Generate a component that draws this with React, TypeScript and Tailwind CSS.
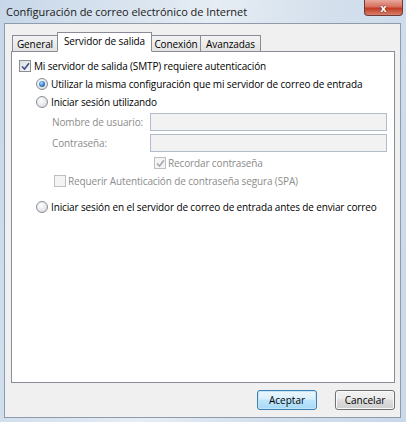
import React from "react";

const F = { fontFamily: '"Open Sans", "Noto Sans", sans-serif' };

function Radio({ checked }: { checked?: boolean }) {
  return (
    <span className="relative inline-flex w-[12px] h-[12px] shrink-0 rounded-full border border-[#8b8d92] bg-[radial-gradient(circle_at_40%_35%,#ffffff_0%,#e6e8eb_55%,#c8ccd2_100%)] items-center justify-center">
      {checked && (
        <span className="w-[6px] h-[6px] rounded-full bg-[radial-gradient(circle_at_40%_35%,#bfe3ff_0%,#3b8ad4_45%,#1b4f86_100%)]" />
      )}
    </span>
  );
}

function Check({ checked, disabled }: { checked?: boolean; disabled?: boolean }) {
  return (
    <span
      className={
        "relative inline-flex w-[12px] h-[12px] shrink-0 border items-center justify-center " +
        (disabled
          ? "border-[#bcbec2] bg-[#f4f4f4]"
          : "border-[#8b8d92] bg-[linear-gradient(135deg,#d9dde2_0%,#f7f7f8_100%)]")
      }
    >
      {checked && (
        <svg width="9" height="9" viewBox="0 0 9 9">
          <path
            d="M1 4.5 L3.5 7 L8 1.2"
            fill="none"
            stroke={disabled ? "#a6a8ac" : "#3f4f8c"}
            strokeWidth="1.6"
          />
        </svg>
      )}
    </span>
  );
}

function Tab({ label, w, selected }: { label: string; w: string; selected?: boolean }) {
  return (
    <div
      className={
        "flex items-center justify-center border border-[#898c95] -ml-px text-[10px] tracking-[-0.1px] text-black " +
        w +
        (selected
          ? " h-[20px] bg-white border-b-white relative z-10 pb-[2px]"
          : " h-[17px] bg-[linear-gradient(#f4f4f4,#e2e2e2)] border-b-0")
      }
    >
      {label}
    </div>
  );
}

export default function App() {
  return (
    <div
      style={F}
      className="w-[406px] h-[422px] overflow-hidden flex flex-col bg-[linear-gradient(100deg,#c7d7e9_0%,#dbe5f0_30%,#e6edf4_45%,#d3dfec_70%,#c9d9ea_100%)]"
    >
      <div className="relative h-[23px] flex items-center pl-[6px] shrink-0">
        <span className="text-[11px] text-[#1a1a1a] pt-[1px] tracking-[-0.05px]">
          Configuración de correo electrónico de Internet
        </span>
        <div className="absolute top-0 right-[3px] w-[39px] h-[16px] rounded-b-[4px] border border-[#6e3b36] border-t-0 bg-[linear-gradient(#e8a89c_0%,#d6705e_45%,#c13b24_55%,#d9806c_100%)] flex items-center justify-center">
          <span className="text-white font-bold text-[11px] leading-none [text-shadow:0_0_1px_#5a1a10,0_0_1px_#5a1a10]">x</span>
        </div>
      </div>
      <div className="ml-[4px] mr-[5px] h-[395px] border border-[#8f9bab] bg-[#f0f0f0] flex flex-col px-[6px] pr-[5px] pt-[9px]">
        <div className="flex items-end h-[19px] pl-[2px] -mb-px">
          <Tab label="General" w="w-[46px]" />
          <Tab label="Servidor de salida" w="w-[95px]" selected />
          <Tab label="Conexión" w="w-[50px]" />
          <Tab label="Avanzadas" w="w-[61px]" />
        </div>
        <div className="h-[332px] border border-[#898c95] bg-white flex flex-col text-[10px] tracking-[-0.13px] text-black pt-[5px]">
          <div className="h-[18px] flex items-center pl-[7px] gap-[3px]">
            <Check checked />
            <span>Mi servidor de salida (SMTP) requiere autenticación</span>
          </div>
          <div className="h-[18px] flex items-center pl-[24px] gap-[3px]">
            <Radio checked />
            <span>Utilizar la misma configuración que mi servidor de correo de entrada</span>
          </div>
          <div className="h-[18px] flex items-center pl-[24px] gap-[3px]">
            <Radio />
            <span>Iniciar sesión utilizando</span>
          </div>
          <div className="mt-[2px] h-[18px] flex items-center pl-[40px] text-[#8c8c8c]">
            <span className="w-[98px]">Nombre de usuario:</span>
            <div className="w-[237px] h-[18px] border border-[#b3bccb] bg-[#f2f2f2]" />
          </div>
          <div className="mt-[3px] h-[18px] flex items-center pl-[40px] text-[#8c8c8c]">
            <span className="w-[98px]">Contraseña:</span>
            <div className="w-[237px] h-[18px] border border-[#b3bccb] bg-[#f2f2f2]" />
          </div>
          <div className="mt-[2px] h-[18px] flex items-center pl-[142px] gap-[2px] text-[#8c8c8c]">
            <Check checked disabled />
            <span>Recordar contraseña</span>
          </div>
          <div className="h-[18px] flex items-center pl-[42px] gap-[2px] text-[#8c8c8c]">
            <Check disabled />
            <span>Requerir Autenticación de contraseña segura (SPA)</span>
          </div>
          <div className="mt-[8px] h-[18px] flex items-center pl-[24px] gap-[3px]">
            <Radio />
            <span>Iniciar sesión en el servidor de correo de entrada antes de enviar correo</span>
          </div>
        </div>
        <div className="flex justify-end gap-[18px] mt-[7px]">
          <button className="w-[60px] h-[20px] rounded-[3px] border border-[#3c7fb1] bg-[linear-gradient(#eaf6fd_0%,#d9f0fc_45%,#bee6fd_50%,#a7d9f5_100%)] text-[10px] text-black shadow-[inset_0_0_0_1px_#c4e5f6]">
            Aceptar
          </button>
          <button className="w-[60px] h-[20px] rounded-[3px] border border-[#707070] bg-[linear-gradient(#f2f2f2_0%,#ebebeb_45%,#dddddd_50%,#cfcfcf_100%)] text-[10px] text-black shadow-[inset_0_0_0_1px_#fbfbfb]">
            Cancelar
          </button>
        </div>
      </div>
    </div>
  );
}
